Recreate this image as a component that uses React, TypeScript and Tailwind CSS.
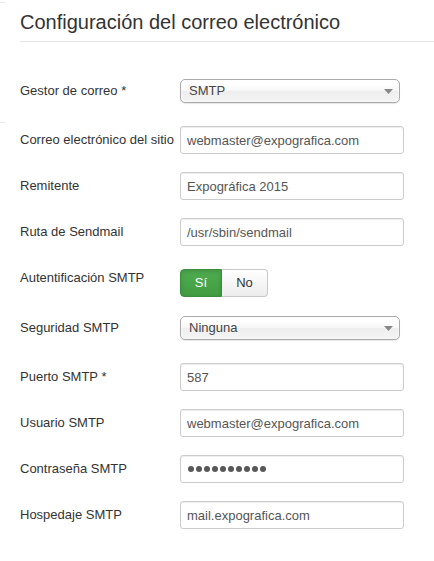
import React from "react";

type Field = {
  label: string;
  kind: "input" | "select" | "toggle" | "password";
  value?: string;
  gap: string;
};

const fields: Field[] = [
  { label: "Gestor de correo *", kind: "select", value: "SMTP", gap: "mt-[37px]" },
  { label: "Correo electrónico del sitio", kind: "input", value: "webmaster@expografica.com", gap: "mt-[23px]" },
  { label: "Remitente", kind: "input", value: "Expográfica 2015", gap: "mt-[18px]" },
  { label: "Ruta de Sendmail", kind: "input", value: "/usr/sbin/sendmail", gap: "mt-[18px]" },
  { label: "Autentificación SMTP", kind: "toggle", gap: "mt-[23px]" },
  { label: "Seguridad SMTP", kind: "select", value: "Ninguna", gap: "mt-[19px]" },
  { label: "Puerto SMTP *", kind: "input", value: "587", gap: "mt-[23px]" },
  { label: "Usuario SMTP", kind: "input", value: "webmaster@expografica.com", gap: "mt-[18px]" },
  { label: "Contraseña SMTP", kind: "password", value: "0123456789", gap: "mt-[18px]" },
  { label: "Hospedaje SMTP", kind: "input", value: "mail.expografica.com", gap: "mt-[18px]" },
];

const ChosenSelect = ({ value }: { value?: string }) => {
  return (
    <div className="relative flex h-[24px] w-[220px] items-center rounded-[5px] border border-[#aaa] bg-[linear-gradient(#ffffff_20%,#f6f6f6_50%,#eeeeee_52%,#f4f4f4_100%)] pl-[8px] text-[13px] text-[#444] shadow-[inset_0_0_3px_#fff,0_1px_1px_rgba(0,0,0,0.1)]">
      <span className="flex-1">{value}</span>
      <svg width="9" height="5" viewBox="0 0 9 5" className="mr-[6px]">
        <path d="M0 0 L9 0 L4.5 5 Z" fill="#888" />
      </svg>
    </div>
  );
};

const TextInput = ({ value }: { value?: string }) => {
  return (
    <input
      type="text"
      readOnly
      defaultValue={value}
      className="h-[28px] w-[224px] rounded-[3px] border border-[#ccc] bg-white px-[6px] text-[13px] text-[#555] shadow-[inset_0_1px_1px_rgba(0,0,0,0.075)] outline-none"
    />
  );
};

// masked value drawn as discs, the browser's own are too small
const PasswordInput = ({ value }: { value?: string }) => {
  const chars = (value ?? "").split("");
  return (
    <div className="flex h-[28px] w-[224px] items-center gap-[2px] rounded-[3px] border border-[#ccc] bg-white px-[7px] shadow-[inset_0_1px_1px_rgba(0,0,0,0.075)]">
      {chars.map((c, i) => (
        <span key={i} className="h-[6px] w-[6px] rounded-full bg-[#585858]" />
      ))}
    </div>
  );
};

const YesNo = () => {
  return (
    <div className="flex h-[28px] text-[13px]">
      <button className="w-[42px] rounded-l-[4px] border border-[#3d8b3d] bg-[linear-gradient(#4fad4f,#429c42)] text-white shadow-[inset_0_2px_4px_rgba(0,0,0,0.15)]">
        Sí
      </button>
      <button className="w-[46px] rounded-r-[4px] border border-l-0 border-[#c8c8c8] bg-[linear-gradient(#ffffff,#ececec)] text-[#333]">
        No
      </button>
    </div>
  );
};

const App = () => {
  return (
    <div className="relative h-[561px] w-[434px] overflow-hidden bg-white font-['Liberation_Sans',Arial,sans-serif] text-[#333]">
      <div className="absolute left-0 top-[2px] h-px w-[5px] bg-[#e8e8e8]" />
      <div className="absolute left-0 top-[122px] h-px w-[5px] bg-[#e8e8e8]" />
      <div className="pl-[20px]">
        <h2 className="border-b border-[#e5e5e5] pb-[7px] pt-[10px] text-[20px] leading-[24px] font-normal">
          Configuración del correo electrónico
        </h2>
        {fields.map((f) => (
          <div
            key={f.label}
            className={`flex ${f.kind === "toggle" ? "items-start" : "items-center"} ${f.gap}`}
          >
            <label className="w-[160px] text-[13px] leading-[18px]">{f.label}</label>
            {f.kind === "select" && <ChosenSelect value={f.value} />}
            {f.kind === "input" && <TextInput value={f.value} />}
            {f.kind === "password" && <PasswordInput value={f.value} />}
            {f.kind === "toggle" && <YesNo />}
          </div>
        ))}
      </div>
    </div>
  );
};

export default App;
